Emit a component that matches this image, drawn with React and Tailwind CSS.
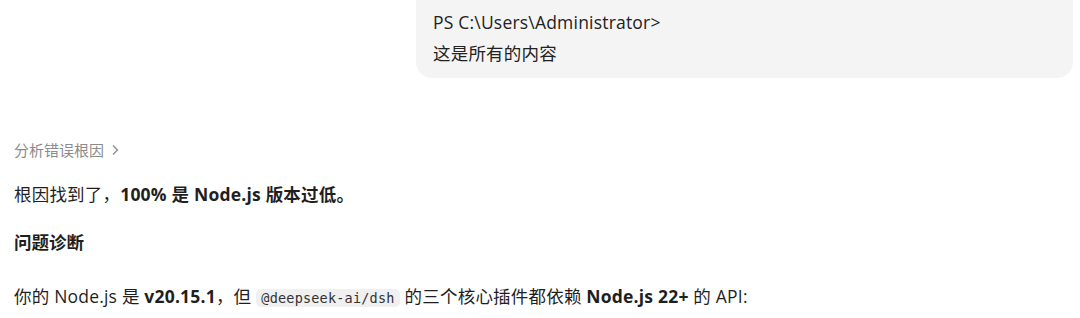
import React from 'react'

const sans = "font-['Open_Sans','Noto_Sans_CJK_SC',sans-serif]"

function InlineCode({ children }) {
  return (
    <code className="mx-[5px] rounded-[5px] bg-[#f0f0f0] px-[5px] py-[1px] font-['DejaVu_Sans_Mono',monospace] text-[13.5px] text-[#333]">
      {children}
    </code>
  )
}

export default function App() {
  return (
    <div className={`h-[318px] w-[1080px] overflow-hidden bg-white text-[#1f1f1f] ${sans}`}>
      {/* user message bubble */}
      <div className="flex justify-end pr-[7px]">
        <div className="-mt-[24px] w-[657px] rounded-[16px] bg-[#f4f4f4] px-[17px] pb-[9px] text-[17.5px] leading-[31px] tracking-[0.2px] text-[#222]">
          <div>&nbsp;</div>
          <div>PS C:\Users\Administrator&gt;</div>
          <div>这是所有的内容</div>
        </div>
      </div>

      <div className="flex flex-col px-[14px]">
        <div className="mt-[61px] flex items-center gap-[7px] text-[15px] leading-[22px] text-[#8b8b8b]">
          <span>分析错误根因</span>
          <svg width="8" height="12" viewBox="0 0 8 12" fill="none" stroke="#8b8b8b" strokeWidth="1.3">
            <path d="M2 1.5 L6.5 6 L2 10.5" />
          </svg>
        </div>

        <p className="mt-[19px] text-[17.5px] leading-[28px] tracking-[0.2px]">
          根因找到了，<strong className="font-bold">100% 是 Node.js 版本过低。</strong>
        </p>

        <h3 className="mt-[20px] text-[17.5px] font-bold leading-[28px]">问题诊断</h3>

        <p className="mt-[26px] text-[17.5px] leading-[28px] tracking-[0.2px]">
          你的 Node.js 是 <strong className="font-bold">v20.15.1</strong>，但
          <InlineCode>@deepseek-ai/dsh</InlineCode>
          的三个核心插件都依赖 <strong className="font-bold">Node.js 22+</strong> 的 API:
        </p>
      </div>
    </div>
  )
}
